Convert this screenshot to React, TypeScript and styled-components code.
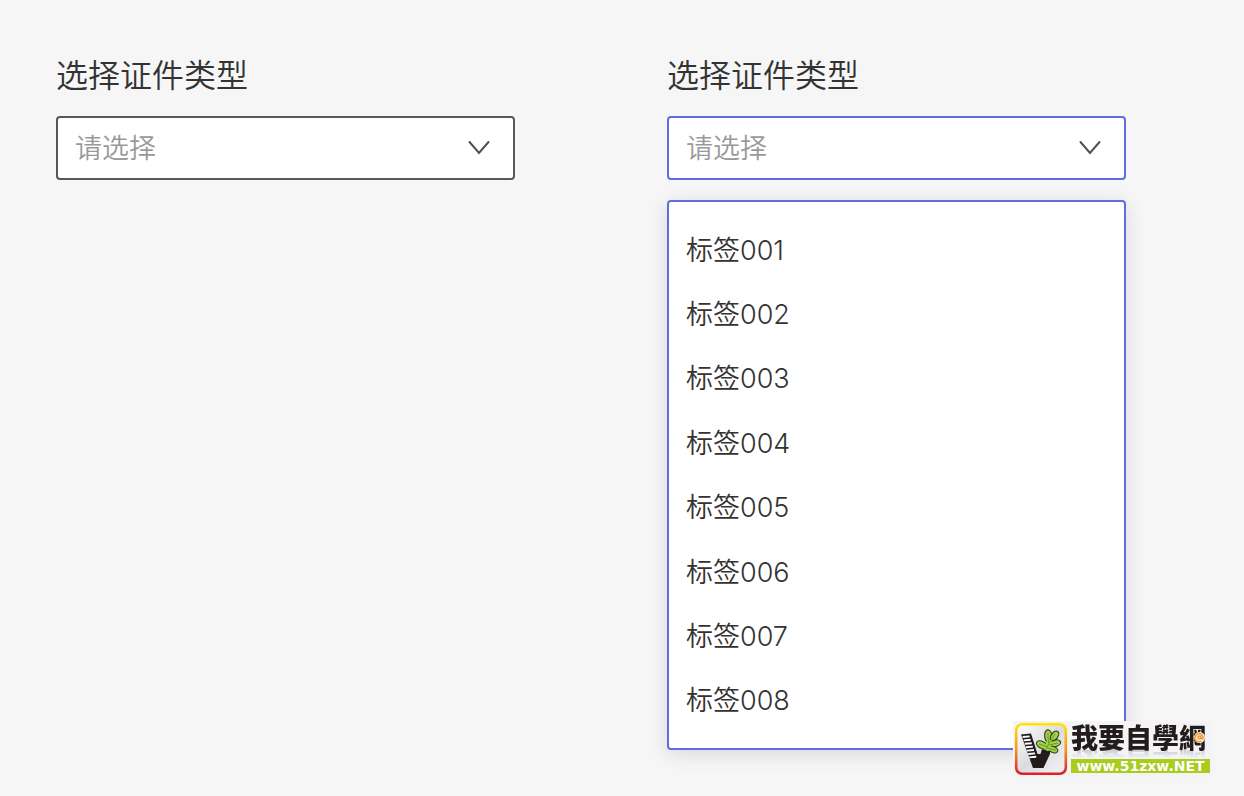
import { useId, useState } from "react";
import styled, { createGlobalStyle } from "styled-components";

const GlobalStyle = createGlobalStyle`
  *, *::before, *::after { box-sizing: border-box; }
  body {
    margin: 0;
    background: #f6f6f6;
    color: #333;
    font-family: Inter, "Noto Sans CJK SC", sans-serif;
  }
`;

const Page = styled.main`
  position: relative;
  min-height: 100vh;
  padding: 52px 118px 46px 56px;
  display: grid;
  grid-template-columns: 1fr 1fr;
  column-gap: 152px;
  align-items: start;
`;

const Field = styled.div`
  display: flex;
  flex-direction: column;
`;

const Label = styled.label`
  margin-bottom: 16px;
  font-size: 32px;
  font-weight: 350;
  line-height: 48px;
`;

const Control = styled.div`
  display: grid;
  align-items: center;
  > * {
    grid-area: 1 / 1;
  }
`;

const Select = styled.select<{ $open: boolean }>`
  appearance: none;
  width: 100%;
  height: 64px;
  padding: 0 56px 0 17px;
  border: 2px solid ${(p) => (p.$open ? "#5f6de0" : "#585858")};
  border-radius: 4px;
  outline: none;
  background: #fff;
  color: #999;
  font-family: inherit;
  font-size: 27px;
  font-weight: 350;
`;

const Chevron = styled.svg`
  justify-self: end;
  margin-right: 24px;
  pointer-events: none;
`;

const Menu = styled.ul`
  display: flex;
  flex-direction: column;
  min-height: 550px;
  margin: 20px 0 0;
  padding: 14px 0 17px;
  list-style: none;
  border: 2px solid #5f6de0;
  border-radius: 4px;
  background: #fff;
  box-shadow: 0 4px 20px rgba(0, 0, 0, 0.12);
`;

const MenuItem = styled.li`
  display: flex;
  flex: 1;
`;

const MenuButton = styled.button`
  flex: 1;
  padding: 0 17px;
  border: 0;
  background: transparent;
  color: #333;
  font-family: inherit;
  font-size: 27px;
  font-weight: 350;
  text-align: left;
  cursor: pointer;
`;

const Brand = styled.a`
  position: absolute;
  right: 31px;
  bottom: 19px;
  display: flex;
  align-items: center;
  gap: 3px;
  height: 56px;
  padding: 0 3px 0 1px;
  border-radius: 3px;
  background: #f4f4f6;
  text-decoration: none;
`;

const BrandText = styled.span`
  display: flex;
  flex-direction: column;
  width: 139px;
  padding-bottom: 2px;
`;

const BrandName = styled.span`
  position: relative;
  height: 36px;
  color: #231c1c;
  font-family: "Noto Sans CJK TC", sans-serif;
  font-size: 27px;
  font-weight: 900;
  line-height: 28px;
  white-space: nowrap;
`;

const BrandWord = styled.span`
  display: block;
  -webkit-box-reflect: below -4px linear-gradient(transparent 60%, rgba(0, 0, 0, 0.25));
`;

const BrandSwirl = styled.svg`
  position: absolute;
  right: 5px;
  top: 9px;
`;

const BrandUrl = styled.span`
  position: relative;
  height: 14px;
  background: #a9cc1d;
  color: #fff;
  font-family: "DejaVu Sans", sans-serif;
  font-size: 14px;
  font-weight: 700;
  line-height: 14px;
  text-align: center;
  white-space: nowrap;
`;

const OPTIONS = ["标签001", "标签002", "标签003", "标签004", "标签005", "标签006", "标签007", "标签008"];

function Dropdown({ label, defaultOpen = false }: { label: string; defaultOpen?: boolean }) {
  const id = useId();
  const [open, setOpen] = useState(defaultOpen);
  const [value, setValue] = useState("");

  return (
    <Field>
      <Label htmlFor={id}>{label}</Label>
      <Control>
        <Select
          id={id}
          $open={open}
          value={value}
          onChange={(e) => setValue(e.target.value)}
          onMouseDown={(e) => {
            e.preventDefault();
            setOpen(!open);
          }}
        >
          <option value="">请选择</option>
          {OPTIONS.map((o) => (
            <option key={o}>{o}</option>
          ))}
        </Select>
        <Chevron width="24" height="18" viewBox="0 0 24 18" fill="none" aria-hidden="true">
          <path d="M2.5 3 12 14 21.5 3" stroke="#505050" strokeWidth="2" strokeLinecap="round" />
        </Chevron>
      </Control>
      {open && (
        <Menu aria-label={label}>
          {OPTIONS.map((o) => (
            <MenuItem key={o}>
              <MenuButton
                type="button"
                onClick={() => {
                  setValue(o);
                  setOpen(false);
                }}
              >
                {o}
              </MenuButton>
            </MenuItem>
          ))}
        </Menu>
      )}
    </Field>
  );
}

function CactusLogo() {
  return (
    <svg width="54" height="54" viewBox="0 0 54 54" aria-hidden="true">
      <defs>
        <linearGradient id="frame" x1="0" y1="0" x2="0" y2="1">
          <stop offset="0" stopColor="#ffe600" />
          <stop offset="0.5" stopColor="#f79422" />
          <stop offset="1" stopColor="#e01f26" />
        </linearGradient>
        <linearGradient id="panel" x1="0" y1="0" x2="1" y2="1">
          <stop offset="0" stopColor="#fff" />
          <stop offset="0.5" stopColor="#dcdce0" />
          <stop offset="1" stopColor="#f4f4f6" />
        </linearGradient>
      </defs>
      <rect x="2.2" y="2.2" width="49.6" height="49.6" rx="6" fill="url(#panel)" stroke="url(#frame)" strokeWidth="2.6" />
      <path d="M7 12.5 L17 11.5 L23.5 32 L26.5 32 L28 27 L36 29 L36 32 L29.5 46 L19 46 Z" fill="#211b1b" />
      <path
        d="M8.6 15 L15.6 14.4 M9.7 18.4 L16.7 17.8 M10.8 21.8 L17.8 21.2 M11.9 25.2 L18.9 24.6 M13 28.6 L20 28 M14.1 32 L21.1 31.4 M15.2 35.4 L22.2 34.8"
        stroke="#fff"
        strokeWidth="1.9"
      />
      <g fill="#a2d149" stroke="#2f4211" strokeWidth="1.2">
        <ellipse cx="34.5" cy="14.5" rx="3.8" ry="6.6" transform="rotate(-8 34.5 14.5)" />
        <ellipse cx="40.5" cy="14" rx="3.3" ry="5.6" transform="rotate(35 40.5 14)" />
        <ellipse cx="28" cy="23" rx="3.5" ry="6" transform="rotate(-62 28 23)" />
        <ellipse cx="41" cy="21.5" rx="3.3" ry="5.8" transform="rotate(72 41 21.5)" />
        <ellipse cx="39" cy="27.5" rx="3" ry="5" transform="rotate(112 39 27.5)" />
      </g>
      <path d="M30 27 L33 18 L38 18 L37 28 L33 29 Z" fill="#a2d149" />
      <path
        d="M32 28 C34 22 37 18 41 12 M35 21 C34 18 34 15 34 11 M34 25 C31 24 28 23 25 22 M35 23 C38 22 41 22 44 21 M34 26 C37 27 39 28 42 28"
        stroke="#5f9420"
        strokeWidth="0.9"
        fill="none"
      />
    </svg>
  );
}

export default function App() {
  return (
    <>
      <GlobalStyle />
      <Page>
        <Dropdown label="选择证件类型" />
        <Dropdown label="选择证件类型" defaultOpen />
        <Brand href="#">
          <CactusLogo />
          <BrandText>
            <BrandName>
              <BrandWord>我要自學網</BrandWord>
              <BrandSwirl width="11" height="11" viewBox="0 0 11 11" aria-hidden="true">
                <circle cx="5.5" cy="5.5" r="5.5" fill="#f6ece0" />
                <path
                  d="M6.8 5.5 A1.4 1.4 0 1 1 5.5 4 Q7 4 7 6 Q7.6 7.6 9 6.3 A4 4 0 1 0 7.2 9.2"
                  fill="none"
                  stroke="#f39a1e"
                  strokeWidth="1.5"
                />
              </BrandSwirl>
            </BrandName>
            <BrandUrl>www.51zxw.NET</BrandUrl>
          </BrandText>
        </Brand>
      </Page>
    </>
  );
}
